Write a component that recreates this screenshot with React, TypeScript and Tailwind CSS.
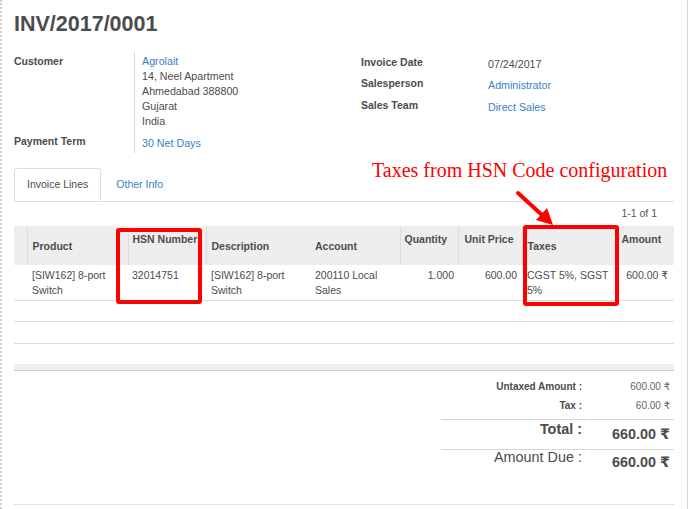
import React from "react"

const customerLines = ["14, Neel Apartment", "Ahmedabad 388800", "Gujarat", "India"]

export default function App() {
  return (
    <div className="relative w-[690px] h-[509px] overflow-hidden bg-white font-['Liberation_Sans','DejaVu_Sans',Arial,sans-serif] text-[#4c4c4c]">
      <div className="w-[688px] h-full border-l-2 border-r border-dotted border-[#cfcfcf] [border-right-style:solid] border-r-[#d6d6d6] pl-3 pr-[13px] pt-[12px]">
        {/* title */}
        <h1 className="text-[21.5px] leading-[24px] font-bold">INV/2017/0001</h1>

        {/* header fields */}
        <div className="flex items-start mt-[16px]">
          <div className="w-[347px] grid grid-cols-[120px_1fr] text-[10.5px] leading-[15px]">
            <div className="pt-[2px] font-bold">Customer</div>
            <div className="border-l border-[#d8d8d8] pl-[7px] pt-[2px] text-[10.7px]">
              <div className="text-[#3582c4]">Agrolait</div>
              {customerLines.map((l) => (
                <div key={l}>{l}</div>
              ))}
            </div>
            <div className="pt-[5px] font-bold">Payment Term</div>
            <div className="border-l border-[#d8d8d8] pl-[7px] pt-[7px] pb-[2px] text-[10.7px] text-[#3582c4]">30 Net Days</div>
          </div>

          <div className="grid grid-cols-[127px_1fr] text-[10.5px] leading-[15px] pt-[2.5px]">
            <div className="h-[21.5px] font-bold">Invoice Date</div>
            <div className="h-[21.5px] pt-[2px] text-[10.7px]">07/24/2017</div>
            <div className="h-[21.5px] font-bold">Salesperson</div>
            <div className="h-[21.5px] pt-[2px] text-[10.7px] text-[#3582c4]">Administrator</div>
            <div className="h-[21.5px] font-bold">Sales Team</div>
            <div className="h-[21.5px] pt-[2px] text-[10.7px] text-[#3582c4]">Direct Sales</div>
          </div>
        </div>

        {/* tabs */}
        <div className="flex mt-[15px] border-b border-[#dddddd] text-[10.5px]">
          <div className="h-[33px] -mb-px flex items-center pt-[1px] px-3 border border-[#dddddd] border-b-white rounded-t-[3px] bg-white">
            Invoice Lines
          </div>
          <div className="h-[33px] flex items-center pt-[1px] px-[15px] text-[#3582c4]">Other Info</div>
        </div>

        {/* pager */}
        <div className="h-[24px] flex items-center justify-end pr-[17px] text-[10.5px] text-[#555]">1-1 of 1</div>

        {/* lines */}
        <table className="w-[660px] table-fixed border-collapse text-[10.5px] leading-[15px]">
          <colgroup>
            <col className="w-[13px]" />
            <col className="w-[101px]" />
            <col className="w-[78px]" />
            <col className="w-[104px]" />
            <col className="w-[90px]" />
            <col className="w-[58px]" />
            <col className="w-[64px]" />
            <col className="w-[95px]" />
            <col className="w-[57px]" />
          </colgroup>
          <thead>
            <tr className="h-[39px] bg-[#eeeeee] font-bold text-left align-top">
              <th className="p-0"></th>
              <th className="border-l border-[#dcdcdc] pl-[5px] pt-[13px] font-bold">Product</th>
              <th className="border-l border-[#dcdcdc] pl-[4px] pt-[6px] font-bold whitespace-nowrap">HSN Number</th>
              <th className="border-l border-[#dcdcdc] pl-[5px] pt-[13px] font-bold">Description</th>
              <th className="pl-[5px] pt-[13px] font-bold">Account</th>
              <th className="border-l border-[#dcdcdc] pl-[4px] pt-[6px] font-bold">Quantity</th>
              <th className="border-l border-[#dcdcdc] pl-[6px] pt-[6px] font-bold">Unit Price</th>
              <th className="border-l border-[#dcdcdc] pl-[5px] pt-[13px] font-bold">Taxes</th>
              <th className="border-l border-[#dcdcdc] pl-[4px] pt-[6px] font-bold">Amount</th>
            </tr>
          </thead>
          <tbody>
            <tr className="h-[35px] align-top border-b border-[#dddddd]">
              <td></td>
              <td className="pl-[5px] pt-[3px]">[SIW162] 8-port Switch</td>
              <td className="pl-[4px] pt-[3px]">32014751</td>
              <td className="pl-[5px] pt-[3px]">[SIW162] 8-port Switch</td>
              <td className="pl-[5px] pt-[3px]">200110 Local Sales</td>
              <td className="pr-[4px] pt-[3px] text-right">1.000</td>
              <td className="pr-[5px] pt-[3px] text-right">600.00</td>
              <td className="pl-[5px] pt-[3px]">CGST 5%, SGST 5%</td>
              <td className="pr-[6px] pt-[3px] text-right whitespace-nowrap">600.00 ₹</td>
            </tr>
            <tr className="h-[21px] border-b border-[#dddddd]">
              <td colSpan={9}></td>
            </tr>
            <tr className="h-[22px] border-b border-[#dddddd]">
              <td colSpan={9}></td>
            </tr>
            <tr className="h-[21px]">
              <td colSpan={9}></td>
            </tr>
          </tbody>
          <tfoot>
            <tr className="h-[6px] bg-[#eeeeee] border-b border-[#cccccc]">
              <td colSpan={9}></td>
            </tr>
          </tfoot>
        </table>

        {/* totals */}
        <div className="h-[134px] border-b border-[#e3e3e3] flex justify-end pt-[6px]">
          <div className="w-[233px] grid grid-cols-[147px_86px] auto-rows-min">
            <div className="h-[19px] pr-[6px] text-right text-[10px] leading-[19px] font-bold">Untaxed Amount :</div>
            <div className="h-[19px] pr-[4px] text-right text-[10px] leading-[19px] text-[#666]">600.00 ₹</div>
            <div className="h-[19px] pr-[6px] text-right text-[10px] leading-[19px] font-bold">Tax :</div>
            <div className="h-[19px] pr-[4px] text-right text-[10px] leading-[19px] text-[#666]">60.00 ₹</div>

            <div className="mt-[4px] h-[30px] border-t border-[#d6d6d6] pr-[6px] text-right text-[14.4px] leading-[18px] font-bold">Total :</div>
            <div className="mt-[4px] h-[30px] border-t border-[#d6d6d6] ml-[1px] pr-[4px] pt-[5px] text-right text-[14.4px] leading-[18px] font-bold whitespace-nowrap">660.00 ₹</div>

            <div className="border-t border-[#d6d6d6] pr-[6px] text-right text-[14.4px] leading-[15px]">Amount Due :</div>
            <div className="border-t border-[#d6d6d6] ml-[1px] pr-[4px] pt-[3px] text-right text-[14.4px] leading-[18px] font-bold whitespace-nowrap">660.00 ₹</div>
          </div>
        </div>
      </div>

      {/* annotation overlay */}
      <div className="absolute left-[372px] top-[158px] text-[20px] leading-[24px] text-[#ff0000] font-['Liberation_Serif','Times_New_Roman',serif] whitespace-nowrap">
        Taxes from HSN Code configuration
      </div>
      <svg className="absolute left-0 top-0" width="690" height="509" viewBox="0 0 690 509">
        <line x1="518" y1="193" x2="542" y2="215" stroke="#ff0000" strokeWidth="4" strokeLinecap="round" />
        <polygon points="553,225 536,220 547,208" fill="#ff0000" />
      </svg>
      <div className="absolute left-[116px] top-[228px] w-[86px] h-[76px] border-4 border-[#ff0000] rounded-[3px]" />
      <div className="absolute left-[523px] top-[225px] w-[96px] h-[81px] border-4 border-[#ff0000] rounded-[3px]" />
    </div>
  )
}
